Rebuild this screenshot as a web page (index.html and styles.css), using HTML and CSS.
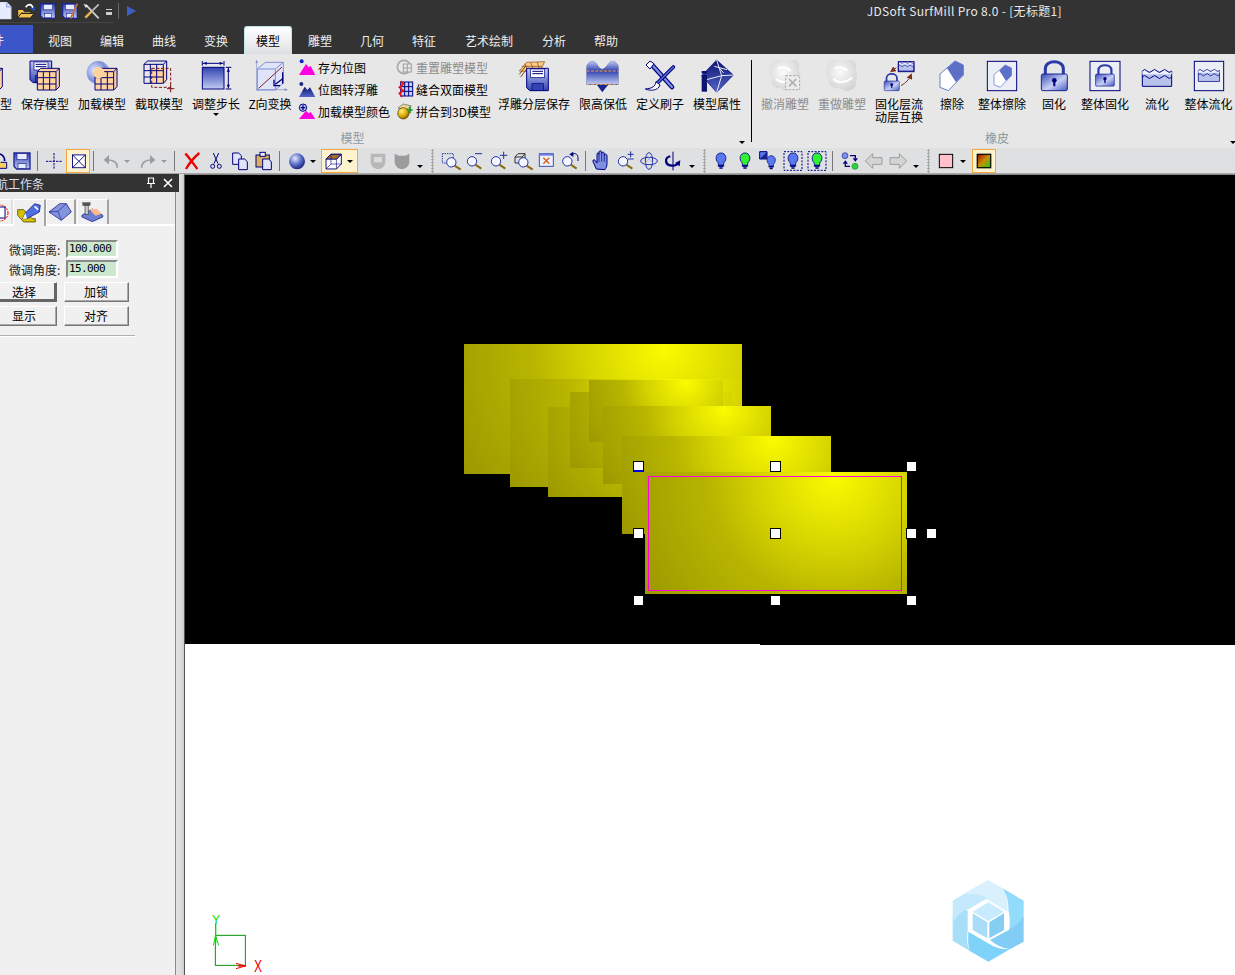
FILE: index.html
```html
<!DOCTYPE html>
<html lang="zh">
<head>
<meta charset="utf-8">
<title>JDSoft SurfMill Pro 8.0</title>
<link rel="stylesheet" href="styles.css">
</head>
<body>
<svg class="defs" aria-hidden="true">
<defs>
<linearGradient id="gb" x1="0" y1="0" x2="0" y2="1"><stop offset="0" stop-color="#3244b0"/><stop offset="1" stop-color="#c0caf2"/></linearGradient>
<linearGradient id="gbr" x1="0" y1="0" x2="0" y2="1"><stop offset="0" stop-color="#c0caf2"/><stop offset="1" stop-color="#3244b0"/></linearGradient>
<linearGradient id="gd" x1="0" y1="0" x2="1" y2="1"><stop offset="0" stop-color="#3a4cb8"/><stop offset=".55" stop-color="#c6d0f4"/><stop offset="1" stop-color="#4a5cc0"/></linearGradient>
<linearGradient id="gm" x1="0" y1="0" x2="0" y2="1"><stop offset="0" stop-color="#0c1470"/><stop offset="1" stop-color="#5566c8"/></linearGradient>
<radialGradient id="gs" cx=".38" cy=".32" r=".75"><stop offset="0" stop-color="#e4e9fb"/><stop offset=".5" stop-color="#5f72cc"/><stop offset="1" stop-color="#12186e"/></radialGradient>
<radialGradient id="gring" cx=".35" cy=".4" r=".75"><stop offset="0" stop-color="#e6ebff"/><stop offset=".6" stop-color="#7d8fd8"/><stop offset="1" stop-color="#c5cbe8"/></radialGradient>
<radialGradient id="gblob" cx=".45" cy=".4" r=".7"><stop offset="0" stop-color="#fafafa"/><stop offset="1" stop-color="#cfcfcf"/></radialGradient>
<radialGradient id="ggold" cx=".35" cy=".3" r=".8"><stop offset="0" stop-color="#fff27a"/><stop offset=".6" stop-color="#d9a300"/><stop offset="1" stop-color="#6b4a00"/></radialGradient>
<linearGradient id="gheat" x1="0" y1="0" x2="1" y2="1"><stop offset="0" stop-color="#a00808"/><stop offset=".5" stop-color="#c89000"/><stop offset="1" stop-color="#10d020"/></linearGradient>

<g id="grid">
<path d="M0 10 L10 0 H66 V55 L56 65 H0Z" fill="#ffd49c" stroke="#00007f" stroke-width="3"/>
<path d="M56 10 L66 0 M0 10H56V65 M18 10V65 M37 10V65 M0 28H56 M0 47H56" fill="none" stroke="#00007f" stroke-width="3"/>
</g>
<g id="eraser">
<path d="M0 39 L45 0 L70 12 V42 L25 89 L0 79Z" fill="#fff" stroke="#6a7dd0" stroke-width="3" stroke-linejoin="round"/>
<path d="M21 22 L45 0 L70 12 V42 L48 64Z" fill="#5c70c8"/>
</g>
<g id="lock">
<path d="M13 40 V22 C13 -6 67 -6 67 22 V40" fill="none" stroke="#2a3aa8" stroke-width="9"/>
<rect x="1" y="38" width="78" height="50" rx="5" fill="url(#gd)" stroke="#1a2490" stroke-width="3"/>
<circle cx="40" cy="57" r="7" fill="#00007f"/><path d="M38 58h4v16h-4z" fill="#00007f" stroke="#00007f" stroke-width="2"/>
</g>
<g id="water">
<path d="M0 6 V52 H88 V6" fill="#b7c3ec" stroke="#00007f" stroke-width="3"/>
<path d="M0 6 q7 -9 14 0 t15 0 t15 0 t15 0 t15 0 t14 0 V16 H0Z" fill="#eef2ff" stroke="none"/>
<path d="M0 6 q7 -9 14 0 t15 0 t15 0 t15 0 t15 0 t14 0 M0 24 q7 -9 14 0 t15 0 t15 0 t15 0 t15 0 t14 0" fill="none" stroke="#00007f" stroke-width="3"/>
</g>
<g id="mag">
<path d="M40 47 L58 59" stroke="#8a6a10" stroke-width="6"/>
<circle cx="30" cy="37" r="14" fill="#f4f7ff" stroke="#2230a8" stroke-width="3"/>
</g>
<g id="bulb">
<path d="M36 12 C20 12 17 32 28 42 V52 H44 V42 C55 32 52 12 36 12Z" stroke="#1a2490" stroke-width="3"/>
<path d="M29 50 H43 M31 57 H41" stroke="#00007f" stroke-width="5"/>
</g>
<marker id="ar" markerWidth="6" markerHeight="6" refX="4" refY="3" orient="auto"><path d="M0 0L6 3L0 6Z" fill="#7d3020"/></marker>

<symbol id="r-cut" viewBox="0 0 120 108"><use href="#grid" x="37" y="28"/></symbol>
<symbol id="r-save" viewBox="0 0 120 108">
<path d="M15 6 H80 V71 H24 L15 62Z" fill="url(#gbr)" stroke="#00007f" stroke-width="3"/>
<rect x="27" y="9" width="42" height="24" fill="#fff" stroke="#00007f" stroke-width="2"/><path d="M32 16H64M32 23H64" stroke="#00007f" stroke-width="3"/>
<rect x="31" y="50" width="34" height="20" fill="#3244b0" stroke="#00007f" stroke-width="2"/>
<use href="#grid" x="37" y="28"/></symbol>
<symbol id="r-load" viewBox="0 0 120 108">
<circle cx="49" cy="41" r="35" fill="url(#gring)"/><use href="#grid" x="39" y="28"/>
<circle cx="50" cy="41" r="17" fill="#ffd49c"/></symbol>
<symbol id="r-crop" viewBox="0 0 120 108">
<rect x="38" y="28" width="44" height="44" fill="#ffd49c"/>
<path d="M15 16 L25 6 H83 V62 L73 73 H15Z" fill="none" stroke="#00007f" stroke-width="3"/>
<path d="M15 16H73V73 M34 16V73 M53 16V73 M15 35H73 M15 54H73 M73 16L83 6" fill="none" stroke="#00007f" stroke-width="3"/>
<path d="M38 28H95V85H38Z" fill="none" stroke="#7f1010" stroke-width="3" stroke-dasharray="9 5"/>
<path d="M95 78V100 M84 89H106" stroke="#7f1010" stroke-width="3"/></symbol>
<symbol id="r-step" viewBox="0 0 120 108">
<rect x="19" y="25" width="65" height="65" fill="url(#gb)" stroke="#00007f" stroke-width="3"/>
<path d="M19 6V20 M84 6V20 M89 25H106 M89 90H106" stroke="#00007f" stroke-width="3"/>
<path d="M21 13H82 M97 27V88" stroke="#00007f" stroke-width="3"/>
<path d="M22 13l10-5v10z M81 13l-10-5v10z M97 28l-5 10h10z M97 87l-5-10h10z" fill="#00007f"/></symbol>
<symbol id="r-z" viewBox="0 0 120 108">
<path d="M22 30 L46 10 H100 V72 L76 93 H22Z" fill="#dfe4f8" stroke="#8090d8" stroke-width="3"/>
<path d="M22 30H76V93 M76 30L100 10" fill="none" stroke="#8090d8" stroke-width="3"/>
<path d="M20 96 V8 M20 92 H108" stroke="#7d8ccc" stroke-width="2"/><path d="M20 2l-4 10h8z M114 92l-10-4v8z" fill="#7d8ccc"/>
<path d="M26 88 L96 24" stroke="#7d2020" stroke-width="3"/>
<path d="M76 76 L100 58 M98 40V74 M72 62 V80 H90" fill="none" stroke="#00007f" stroke-width="4"/></symbol>
<symbol id="r-layer" viewBox="0 0 120 108">
<path d="M16 36 L38 10 L92 8 L76 40Z" fill="#ffc98a" stroke="#7f4a10" stroke-width="2"/>
<path d="M24 22 L84 22 M32 14 L44 38 M50 10 L60 38 M70 9 L76 30" stroke="#7f4a10" stroke-width="2"/>
<path d="M16 46 L36 20 M20 54 L38 30" stroke="#7f4a10" stroke-width="3"/>
<path d="M38 28 H103 V95 H47 L38 86Z" fill="url(#gbr)" stroke="#00007f" stroke-width="3"/>
<rect x="50" y="30" width="42" height="25" fill="#fff" stroke="#00007f" stroke-width="2"/><path d="M55 37H87M55 44H87" stroke="#00007f" stroke-width="3"/>
<rect x="54" y="74" width="34" height="20" fill="#3244b0" stroke="#00007f" stroke-width="2"/></symbol>
<symbol id="r-limit" viewBox="0 0 120 108">
<path d="M11 20 Q26 -6 42 16 Q56 44 75 16 Q91 -6 106 20 V78 L75 78 L58 100 L42 78 H11Z" fill="#1a2690"/>
<path d="M11 20 Q26 -6 42 16 Q56 44 75 16 Q91 -6 106 20 V36 H11Z" fill="url(#gbr)"/>
<path d="M11 36 H106 V76 H11Z" fill="url(#gb)"/>
<path d="M11 36H106 M11 76H106" stroke="#f5a742" stroke-width="3" stroke-dasharray="9 4"/></symbol>
<symbol id="r-brush" viewBox="0 0 120 108">
<path d="M40 22 L96 84" stroke="#00007f" stroke-width="14" stroke-linecap="round"/><path d="M40 22 L96 84" stroke="#7f8fe0" stroke-width="7" stroke-linecap="round"/>
<path d="M100 24 L52 72" stroke="#00007f" stroke-width="11" stroke-linecap="round"/><path d="M100 24 L52 72" stroke="#5a6cd0" stroke-width="5" stroke-linecap="round"/>
<path d="M48 68 C46 82 38 88 16 90 C30 96 54 96 60 78Z" fill="#fff" stroke="#00007f" stroke-width="3"/>
<path d="M18 18 L30 6 L42 14 L30 30Z" fill="#fff" stroke="#00007f" stroke-width="3"/></symbol>
<symbol id="r-prop" viewBox="0 0 120 108">
<path d="M59 3 L109 48 L59 100 L14 50Z" fill="url(#gm)" stroke="#00007f" stroke-width="2"/>
<path d="M59 3 L74 50 L29 62 M74 50 L109 48 M74 50 L59 100 M52 22L90 32 M66 26 L80 42" fill="none" stroke="#e8ecff" stroke-width="3"/>
<rect x="14" y="48" width="16" height="50" fill="#0c1470"/><rect x="14" y="36" width="16" height="8" fill="#0c1470"/></symbol>
<symbol id="r-undo" viewBox="0 0 120 108">
<path d="M30 6 C52 -2 64 10 80 4 C102 -2 106 22 100 34 C112 54 100 68 96 78 C80 100 56 96 48 86 C30 92 14 74 20 56 C6 40 14 16 30 6Z" fill="url(#gblob)"/>
<path d="M38 30 C50 20 70 26 76 36 M34 60 C48 74 70 72 84 58" fill="none" stroke="#fff" stroke-width="6"/>
<rect x="62" y="50" width="42" height="42" fill="#ececec" stroke="#a8a8a8" stroke-width="3" stroke-dasharray="7 4"/>
<path d="M72 60L94 82M94 60L72 82" stroke="#b0b0b0" stroke-width="5"/></symbol>
<symbol id="r-redo" viewBox="0 0 120 108">
<path d="M30 6 C52 -2 64 10 80 4 C102 -2 106 22 100 34 C112 54 100 68 100 82 C88 102 62 96 54 88 C32 92 14 74 20 56 C6 40 14 16 30 6Z" fill="url(#gblob)"/>
<path d="M38 30 C50 20 70 26 76 36 M34 60 C48 74 70 72 90 56" fill="none" stroke="#fff" stroke-width="6"/></symbol>
<symbol id="r-swap" viewBox="0 0 120 108">
<g transform="translate(58 0) scale(.53)"><use href="#water" x="0" y="15"/></g>
<rect x="58" y="8" width="47" height="30" fill="none" stroke="#00007f" stroke-width="3"/>
<path d="M66 80 C80 72 90 62 96 48" fill="none" stroke="#7d3020" stroke-width="3" marker-end="url(#ar)"/>
<path d="M52 26 L38 36" stroke="#7d3020" stroke-width="3" marker-end="url(#ar)"/>
<g transform="translate(15 44) scale(.58)"><use href="#lock"/></g></symbol>
<symbol id="r-erase" viewBox="0 0 120 108"><use href="#eraser" x="24" y="6"/></symbol>
<symbol id="r-eraseall" viewBox="0 0 120 108"><rect x="16" y="7" width="88" height="88" fill="#eceef6" stroke="#00007f" stroke-width="3"/><g transform="translate(36 18) scale(.75)"><use href="#eraser"/></g></symbol>
<symbol id="r-fix" viewBox="0 0 120 108"><use href="#lock" x="21" y="7"/></symbol>
<symbol id="r-fixall" viewBox="0 0 120 108"><rect x="15" y="7" width="90" height="88" fill="#eceef6" stroke="#00007f" stroke-width="3"/><g transform="translate(31 18) scale(.72)"><use href="#lock"/></g></symbol>
<symbol id="r-flow" viewBox="0 0 120 108"><use href="#water" x="16" y="30"/></symbol>
<symbol id="r-flowall" viewBox="0 0 120 108"><rect x="16" y="7" width="88" height="88" fill="#eceef6" stroke="#00007f" stroke-width="3"/><g transform="translate(28 30) scale(.72)"><use href="#water"/></g></symbol>

<symbol id="s-pic" viewBox="0 0 54 54"><path d="M3 51 L24 18 L32 28 L38 24 L52 51Z" fill="#ff00e0"/><circle cx="11" cy="10" r="6" fill="#1020d0"/></symbol>
<symbol id="s-relief" viewBox="0 0 54 54"><path d="M3 51 L20 20 L28 30 L36 22 L52 51Z" fill="url(#gm)"/><circle cx="10" cy="12" r="6" fill="#222a80"/></symbol>
<symbol id="s-color" viewBox="0 0 54 54"><path d="M3 51 L24 26 L32 34 L38 30 L52 51Z" fill="#ff00e0"/><circle cx="15" cy="17" r="11" fill="#c0caf2" stroke="#00007f" stroke-width="3"/><path d="M15 10V24M8 17H22" stroke="#00007f" stroke-width="4"/></symbol>
<symbol id="s-reset" viewBox="0 0 54 54"><circle cx="24" cy="27" r="20" fill="none" stroke="#a8a8a8" stroke-width="5"/><rect x="22" y="18" width="24" height="24" fill="#e7e7e7" stroke="#a0a0a0" stroke-width="3"/><path d="M34 18V42M22 30H46" stroke="#a0a0a0" stroke-width="3"/></symbol>
<symbol id="s-sew" viewBox="0 0 54 54"><rect x="14" y="6" width="36" height="42" fill="#c6d0f4" stroke="#00007f" stroke-width="3"/><path d="M26 6V48M38 6V48M14 20H50M14 34H50" stroke="#00007f" stroke-width="3"/><path d="M14 3 L22 12 L10 22 L22 32 L10 40 L18 51" fill="none" stroke="#ee1010" stroke-width="5"/></symbol>
<symbol id="s-merge" viewBox="0 0 54 54"><path d="M6 18 L22 6 L46 12 L30 24Z" fill="#eadf9a" stroke="#555" stroke-width="2"/><circle cx="22" cy="34" r="17" fill="url(#ggold)" stroke="#4a3500" stroke-width="2"/><path d="M42 14V34M34 24H50" stroke="#0a9a20" stroke-width="5"/></symbol>

<symbol id="t-redoy" viewBox="0 0 72 72"><path d="M20 58 H62 V40 H44" fill="#f8d060" stroke="#00007f" stroke-width="3"/><path d="M26 16 C46 12 56 20 56 36" fill="none" stroke="#00007f" stroke-width="5"/></symbol>
<symbol id="t-save" viewBox="0 0 72 72"><path d="M12 12H60V60H20L12 52Z" fill="url(#gb)" stroke="#1a2490" stroke-width="4"/><rect x="21" y="14" width="30" height="18" fill="#e8ecff" stroke="#1a2490" stroke-width="2"/><rect x="24" y="44" width="24" height="14" fill="#e8ecff" stroke="#1a2490" stroke-width="2"/></symbol>
<symbol id="t-cross" viewBox="0 0 72 72"><path d="M12 37H60M36 12V62" stroke="#00007f" stroke-width="3" stroke-dasharray="7 3"/></symbol>
<symbol id="t-boxx" viewBox="0 0 72 72"><rect x="18" y="16" width="42" height="42" fill="#fff" stroke="#00007f" stroke-width="3"/><path d="M18 16L60 58M60 16L18 58" stroke="#00007f" stroke-width="3"/></symbol>
<symbol id="t-undo" viewBox="0 0 72 72"><path d="M55 56 C55 38 40 32 24 33" fill="none" stroke="#9c9c9c" stroke-width="5"/><path d="M14 33 L30 18 V46Z" fill="#9c9c9c"/></symbol>
<symbol id="t-redo" viewBox="0 0 72 72"><path d="M17 56 C17 38 32 32 48 33" fill="none" stroke="#9c9c9c" stroke-width="5"/><path d="M58 33 L42 18 V46Z" fill="#9c9c9c"/></symbol>
<symbol id="t-x" viewBox="0 0 72 72"><path d="M16 14 C28 26 40 44 52 60 M58 12 C44 24 28 42 18 60" fill="none" stroke="#f00000" stroke-width="7"/></symbol>
<symbol id="t-cut" viewBox="0 0 72 72"><path d="M28 12 L42 44 M44 12 L30 44" stroke="#00007f" stroke-width="3"/><circle cx="26" cy="52" r="6" fill="none" stroke="#00007f" stroke-width="3"/><circle cx="46" cy="52" r="6" fill="none" stroke="#00007f" stroke-width="3"/></symbol>
<symbol id="t-copy" viewBox="0 0 72 72"><path d="M14 12H32L40 20V46H14Z" fill="#dfe4fa" stroke="#00007f" stroke-width="3"/><path d="M32 30H50L58 38V62H32Z" fill="#dfe4fa" stroke="#00007f" stroke-width="3"/></symbol>
<symbol id="t-paste" viewBox="0 0 72 72"><rect x="12" y="18" width="40" height="36" fill="#d8b060" stroke="#00007f" stroke-width="3"/><rect x="24" y="10" width="16" height="12" fill="#eee" stroke="#00007f" stroke-width="3"/><path d="M32 30H50L58 38V62H32Z" fill="#dfe4fa" stroke="#00007f" stroke-width="3"/></symbol>
<symbol id="t-sphere" viewBox="0 0 72 72"><circle cx="36" cy="37" r="24" fill="url(#gs)"/></symbol>
<symbol id="t-cube" viewBox="0 0 72 72"><path d="M10 30L26 14H60V46L44 62H10Z" fill="#fff" stroke="#00007f" stroke-width="3"/><path d="M10 30L26 14H60L44 30Z" fill="#a0702a" stroke="#00007f" stroke-width="3"/><path d="M44 30V62M60 14L44 30M26 14V46H60M26 46L10 62" fill="none" stroke="#00007f" stroke-width="2"/></symbol>
<symbol id="t-sh1" viewBox="0 0 72 72"><path d="M14 14H58V38C58 52 46 60 36 60C26 60 14 52 14 38Z" fill="#b8b8b8"/><path d="M24 24H48V40H24Z" fill="#dcdcdc"/></symbol>
<symbol id="t-sh2" viewBox="0 0 72 72"><path d="M14 14L26 20H46L58 14V38C58 52 46 60 36 60C26 60 14 52 14 38Z" fill="#9c9c9c"/></symbol>
<symbol id="t-z1" viewBox="0 0 72 72"><rect x="13" y="14" width="33" height="28" fill="none" stroke="#2230a8" stroke-width="3" stroke-dasharray="4 3"/><use href="#mag" x="10" y="3"/></symbol>
<symbol id="t-z2" viewBox="0 0 72 72"><use href="#mag"/><path d="M39 14H60" stroke="#2230a8" stroke-width="3"/></symbol>
<symbol id="t-z3" viewBox="0 0 72 72"><use href="#mag"/><path d="M42 19H64M53 8V30" stroke="#2230a8" stroke-width="3"/></symbol>
<symbol id="t-z4" viewBox="0 0 72 72"><path d="M15 24L24 14H45V42H15Z M15 24H36V42 M36 24L45 14" fill="none" stroke="#333" stroke-width="3"/><use href="#mag" x="10" y="3"/></symbol>
<symbol id="t-z5" viewBox="0 0 72 72"><rect x="16" y="14" width="42" height="38" fill="#eef1ff" stroke="#3a4cc0" stroke-width="3"/><rect x="16" y="14" width="42" height="6" fill="#6f80d8"/><path d="M28 26L46 44M46 26L28 44" stroke="#e05a10" stroke-width="4"/></symbol>
<symbol id="t-z6" viewBox="0 0 72 72"><use href="#mag" x="-2"/><path d="M40 18 C48 10 60 14 60 26 V36" fill="none" stroke="#00007f" stroke-width="3"/><path d="M34 16L46 8V24Z" fill="#00007f"/></symbol>
<symbol id="t-hand" viewBox="0 0 72 72"><path d="M22 60 L12 38 C10 32 16 30 20 36 L24 42 V16 C24 10 30 10 30 16 V10 C30 4 38 4 38 10 V14 C38 8 46 8 46 14 V20 C46 14 54 14 54 20 V44 C54 54 50 58 48 62Z" fill="#7f90e0" stroke="#00007f" stroke-width="3"/><path d="M30 16V38M38 14V38M46 20V38" stroke="#00007f" stroke-width="2"/></symbol>
<symbol id="t-zpm" viewBox="0 0 72 72"><use href="#mag"/><path d="M44 16H62M53 7V25M44 30H62" stroke="#2230a8" stroke-width="3"/></symbol>
<symbol id="t-atom" viewBox="0 0 72 72"><ellipse cx="36" cy="36" rx="25" ry="11" fill="none" stroke="#2230a8" stroke-width="3"/><ellipse cx="36" cy="36" rx="11" ry="25" fill="none" stroke="#2230a8" stroke-width="3"/><path d="M26 16L54 50M46 16L20 50" stroke="#8898e0" stroke-width="2"/></symbol>
<symbol id="t-rot" viewBox="0 0 72 72"><path d="M36 8V64" stroke="#00007f" stroke-width="3"/><path d="M28 22 C10 24 10 50 34 50 C44 50 50 46 52 40" fill="none" stroke="#00007f" stroke-width="7"/><path d="M42 42L58 34L56 52Z" fill="#00007f"/></symbol>
<symbol id="t-b1" viewBox="0 0 72 72"><use href="#bulb" fill="#5a78f0"/></symbol>
<symbol id="t-b2" viewBox="0 0 72 72"><use href="#bulb" fill="#30f030"/></symbol>
<symbol id="t-b3" viewBox="0 0 72 72"><path d="M8 8H30V30H8Z" fill="#5a78f0" stroke="#00007f" stroke-width="3"/><path d="M8 30L30 8V30Z" fill="#1a2490"/><g transform="translate(12 10) scale(.85)"><use href="#bulb" fill="#5a78f0"/></g></symbol>
<symbol id="t-b4" viewBox="0 0 72 72"><rect x="9" y="8" width="54" height="56" fill="none" stroke="#00007f" stroke-width="3" stroke-dasharray="6 4"/><use href="#bulb" fill="#5a78f0"/></symbol>
<symbol id="t-b5" viewBox="0 0 72 72"><rect x="9" y="8" width="54" height="56" fill="none" stroke="#00007f" stroke-width="3" stroke-dasharray="6 4"/><use href="#bulb" fill="#30f030"/></symbol>
<symbol id="t-cyc" viewBox="0 0 72 72"><circle cx="21" cy="20" r="9" fill="#7d8fe8" stroke="#2230a8" stroke-width="2"/><circle cx="51" cy="52" r="9" fill="#30d040" stroke="#109020" stroke-width="2"/><path d="M36 20H52V28 M36 52H22V44" fill="none" stroke="#00007f" stroke-width="4"/><path d="M44 28H60L52 38Z M14 44H30L22 34Z" fill="#00007f"/></symbol>
<symbol id="t-al" viewBox="0 0 72 72"><path d="M10 36L32 14V26H60V46H32V58Z" fill="#d4d4d4" stroke="#9c9c9c" stroke-width="3"/></symbol>
<symbol id="t-ar" viewBox="0 0 72 72"><path d="M62 36L40 14V26H12V46H40V58Z" fill="#d4d4d4" stroke="#9c9c9c" stroke-width="3"/></symbol>
<symbol id="t-pink" viewBox="0 0 72 72"><rect x="16" y="16" width="40" height="40" fill="#ffc0cb" stroke="#000" stroke-width="3"/></symbol>
<symbol id="t-heat" viewBox="0 0 72 72"><rect x="14" y="14" width="44" height="44" fill="url(#gheat)" stroke="#000" stroke-width="4"/></symbol>
</defs>
</svg>

<header class="titlebar">
  <div class="qat">
    <svg class="q q-new" viewBox="0 0 36 48"><path d="M-6 4H16L26 14V42H-6Z" fill="#e6ebff" stroke="#dfe3f5" stroke-width="3"/><path d="M16 4V14H26" fill="none" stroke="#9aa6d8" stroke-width="3"/></svg>
    <svg class="q" viewBox="0 0 66 66"><path d="M8 54 V28 H24 L28 34 H48 V40H18L8 54 H46 L58 40 H18" fill="#f0c050" stroke="#222" stroke-width="3"/><path d="M32 22 C40 10 50 12 54 24" fill="none" stroke="#fff" stroke-width="5"/><path d="M46 26L60 20L58 34Z" fill="#2a48c8"/></svg>
    <svg class="q" viewBox="0 0 72 72"><use href="#t-save"/></svg>
    <svg class="q" viewBox="0 0 72 72"><use href="#t-save"/><path d="M38 60L60 12" stroke="#c8743c" stroke-width="6"/></svg>
    <svg class="q" viewBox="0 0 72 72"><path d="M16 16L58 60" stroke="#d0d0d0" stroke-width="6"/><path d="M58 14L34 38" stroke="#bbb" stroke-width="6"/><path d="M34 38L14 58" stroke="#e8b24c" stroke-width="8"/><path d="M8 12L22 18L16 26Z" fill="#eee"/></svg>
    <i class="qdd"></i>
    <span class="qsep"></span>
    <i class="qplay"></i>
  </div>
  <div class="apptitle">JDSoft SurfMill Pro 8.0 - [无标题1]</div>
</header>

<nav class="tabs">
  <span class="filetab">文件</span>
  <span class="tab">视图</span><span class="tab">编辑</span><span class="tab">曲线</span><span class="tab">变换</span>
  <span class="tab active">模型</span>
  <span class="tab">雕塑</span><span class="tab">几何</span><span class="tab">特征</span>
  <span class="tab wide">艺术绘制</span>
  <span class="tab">分析</span><span class="tab">帮助</span>
</nav>

<section class="ribbon">
  <div class="group g-model">
    <div class="items">
      <div class="rb w57"><svg class="ric"><use href="#r-cut"/></svg><span>编辑模型</span></div>
      <div class="rb w57"><svg class="ric"><use href="#r-save"/></svg><span>保存模型</span></div>
      <div class="rb w57"><svg class="ric"><use href="#r-load"/></svg><span>加载模型</span></div>
      <div class="rb w57"><svg class="ric"><use href="#r-crop"/></svg><span>截取模型</span></div>
      <div class="rb w57"><svg class="ric"><use href="#r-step"/></svg><span>调整步长</span><i class="caret"></i></div>
      <div class="rb w51"><svg class="ric"><use href="#r-z"/></svg><span>Z向变换</span></div>
      <div class="smallcol c1">
        <div class="sm"><svg class="sic"><use href="#s-pic"/></svg>存为位图</div>
        <div class="sm"><svg class="sic"><use href="#s-relief"/></svg>位图转浮雕</div>
        <div class="sm"><svg class="sic"><use href="#s-color"/></svg>加载模型颜色</div>
      </div>
      <div class="smallcol c2">
        <div class="sm off"><svg class="sic"><use href="#s-reset"/></svg>重置雕塑模型</div>
        <div class="sm"><svg class="sic"><use href="#s-sew"/></svg>缝合双面模型</div>
        <div class="sm"><svg class="sic"><use href="#s-merge"/></svg>拼合到3D模型</div>
      </div>
      <div class="rb w81"><svg class="ric"><use href="#r-layer"/></svg><span>浮雕分层保存</span></div>
      <div class="rb w57"><svg class="ric"><use href="#r-limit"/></svg><span>限高保低</span></div>
      <div class="rb w57"><svg class="ric"><use href="#r-brush"/></svg><span>定义刷子</span></div>
      <div class="rb w57"><svg class="ric"><use href="#r-prop"/></svg><span>模型属性</span></div>
    </div>
    <div class="glabel">模型<i class="launch"></i></div>
  </div>
  <div class="gsep"></div>
  <div class="group g-eraser">
    <div class="items">
      <div class="rb w57 off"><svg class="ric"><use href="#r-undo"/></svg><span>撤消雕塑</span></div>
      <div class="rb w57 off"><svg class="ric"><use href="#r-redo"/></svg><span>重做雕塑</span></div>
      <div class="rb w57"><svg class="ric"><use href="#r-swap"/></svg><span>固化层流<br>动层互换</span></div>
      <div class="rb w49"><svg class="ric"><use href="#r-erase"/></svg><span>擦除</span></div>
      <div class="rb w51"><svg class="ric"><use href="#r-eraseall"/></svg><span>整体擦除</span></div>
      <div class="rb w53"><svg class="ric"><use href="#r-fix"/></svg><span>固化</span></div>
      <div class="rb w49"><svg class="ric"><use href="#r-fixall"/></svg><span>整体固化</span></div>
      <div class="rb w55"><svg class="ric"><use href="#r-flow"/></svg><span>流化</span></div>
      <div class="rb w48"><svg class="ric"><use href="#r-flowall"/></svg><span>整体流化</span></div>
    </div>
    <div class="glabel">橡皮<i class="launch"></i></div>
  </div>
</section>

<section class="toolbar">
  <svg class="t"><use href="#t-redoy"/></svg><svg class="t"><use href="#t-save"/></svg>
  <i class="sep"></i>
  <svg class="t m2"><use href="#t-cross"/></svg>
  <span class="hot"><svg class="t"><use href="#t-boxx"/></svg></span>
  <i class="sep"></i>
  <svg class="t m3"><use href="#t-undo"/></svg><i class="dd w8 gray"></i>
  <svg class="t m5"><use href="#t-redo"/></svg><i class="dd w8 gray"></i>
  <i class="sep m3"></i>
  <svg class="t m3"><use href="#t-x"/></svg><svg class="t"><use href="#t-cut"/></svg><svg class="t"><use href="#t-copy"/></svg><svg class="t"><use href="#t-paste"/></svg>
  <i class="sep"></i>
  <svg class="t m3"><use href="#t-sphere"/></svg><i class="dd w8"></i>
  <span class="hot hotwide m4"><svg class="t"><use href="#t-cube"/></svg><i class="dd w8"></i></span>
  <svg class="t m8"><use href="#t-sh1"/></svg><svg class="t"><use href="#t-sh2"/></svg><i class="dd w12 low"></i>
  <i class="grip w12"></i>
  <svg class="t"><use href="#t-z1"/></svg><svg class="t"><use href="#t-z2"/></svg><svg class="t"><use href="#t-z3"/></svg><svg class="t"><use href="#t-z4"/></svg><svg class="t"><use href="#t-z5"/></svg><svg class="t"><use href="#t-z6"/></svg>
  <i class="sep"></i>
  <svg class="t m1"><use href="#t-hand"/></svg><svg class="t"><use href="#t-zpm"/></svg><svg class="t"><use href="#t-atom"/></svg><svg class="t"><use href="#t-rot"/></svg><i class="dd w14 low"></i>
  <i class="grip w10"></i>
  <svg class="t"><use href="#t-b1"/></svg><svg class="t"><use href="#t-b2"/></svg><svg class="t"><use href="#t-b3"/></svg><svg class="t"><use href="#t-b4"/></svg><svg class="t"><use href="#t-b5"/></svg>
  <i class="sep"></i>
  <svg class="t m3"><use href="#t-cyc"/></svg><svg class="t"><use href="#t-al"/></svg><svg class="t"><use href="#t-ar"/></svg><i class="dd w12 low"></i>
  <i class="grip w12"></i>
  <svg class="t"><use href="#t-pink"/></svg><i class="dd w10"></i>
  <span class="hot m4"><svg class="t"><use href="#t-heat"/></svg></span>
</section>

<main class="workspace">
  <aside class="panel">
    <div class="paneltitle"><span class="ptext">导航工作条</span>
      <svg class="pin" viewBox="0 0 10 12"><path d="M2.5 1H7.5V6.5H2.5Z M1 6.5H9 M5 7V11" fill="none" stroke="#fff" stroke-width="1.2"/></svg>
      <svg class="close" viewBox="0 0 10 10"><path d="M1 1L9 9M9 1L1 9" stroke="#fff" stroke-width="1.6"/></svg>
    </div>
    <div class="ptabs">
      <div class="ptab t0"><svg class="pti0" viewBox="0 0 12 24"><circle cx="0" cy="13" r="8" fill="none" stroke="#f00" stroke-width="1" stroke-dasharray="2 1"/><rect x="-4" y="7" width="9" height="11" fill="#fff" stroke="#00007f"/></svg></div>
      <div class="ptab t1"><svg class="pti" viewBox="55 98 75 60"><path d="M57 118H75L100 145H110V155H75L57 135Z" fill="#d8c000" stroke="#2a2a00" stroke-width="2"/><path d="M108 100L125 105L122 125L85 145H72L80 128Z" fill="#4f6ee0" stroke="#00007f" stroke-width="2"/><path d="M108 108L118 118" stroke="#fff" stroke-width="5"/><path d="M72 145L80 128L85 145Z" fill="#fff"/></svg></div>
      <div class="ptab t2"><svg class="pti" viewBox="150 100 75 60"><path d="M153 130L185 105H205L220 130L190 155Z" fill="#8494dc" stroke="#00007f" stroke-width="2"/><path d="M153 130L180 128L205 105M180 128L190 155" fill="none" stroke="#00007f" stroke-width="1.5"/></svg></div>
      <div class="ptab t3"><svg class="pti" viewBox="248 103 75 63"><path d="M252 145L285 125L318 145V150L285 165L252 150Z" fill="#6c7ed0" stroke="#00007f" stroke-width="2"/><path d="M275 125H300L315 140L295 146Z" fill="#ffb890"/><rect x="255" y="105" width="23" height="9" fill="#555" stroke="#222"/><rect x="262" y="114" width="10" height="28" fill="#ccc" stroke="#333" stroke-width="2"/></svg></div>
    </div>
    <div class="pbody">
      <div class="fields">
        <label class="field"><span>微调距离:</span><span class="inp">100.000</span></label>
        <label class="field"><span>微调角度:</span><span class="inp">15.000</span></label>
      </div>
      <div class="btns">
        <button class="btn def">选择</button><button class="btn">加锁</button>
        <button class="btn">显示</button><button class="btn">对齐</button>
      </div>
      <div class="rule"></div>
    </div>
  </aside>
  <div class="splitter"></div>
  <div class="view">
    <div class="canvas">
      <div class="y r1"></div><div class="y r2"></div><div class="y r3"></div><div class="y r4"></div>
      <div class="y r5"></div><div class="y r6"></div><div class="y r7"></div><div class="y r8"></div>
      <div class="pinkbox"></div>
      <i class="h ha first"></i><i class="h hb"></i><i class="h hc"></i>
      <i class="h hd"></i><i class="h he"></i><i class="h hf"></i><i class="h hg"></i>
      <i class="h hh"></i><i class="h hi"></i><i class="h hj"></i>
      <i class="notch"></i>
    </div>
    <svg class="axis" viewBox="0 0 300 225">
      <rect x="136" y="106" width="90" height="90" fill="none" stroke="#0a900a" stroke-width="3"/>
      <path d="M137 70V130" stroke="#00e000" stroke-width="4"/>
      <path d="M137 108L130 136M137 108L146 136" stroke="#00e000" stroke-width="3"/>
      <path d="M198 190L226 198L198 206" fill="none" stroke="#f00000" stroke-width="3"/><path d="M205 198H228" stroke="#f00000" stroke-width="4"/>
      <text x="138" y="72" class="axy">Y</text>
      <text transform="translate(264 215) scale(.7 1)" class="axx">X</text>
    </svg>
    <svg class="logo" viewBox="0 0 330 300">
      <path d="M175 30L218 55Q238 95 232 125L175 90Q150 70 105 68Z" fill="#d8f1fd"/>
      <path d="M218 55L281 92V135Q262 172 236 185Q243 155 235 118Q238 90 218 55Z" fill="#93dbfb"/>
      <path d="M281 135V215L240 238Q205 232 180 210L232 182Q262 170 281 135Z" fill="#82cdf5"/>
      <path d="M240 238L175 275L118 242Q112 215 115 185L172 218Q200 238 240 238Z" fill="#7fd3fb"/>
      <path d="M118 242L68 212V140Q85 112 113 122V185Q108 215 118 242Z" fill="#a9def9"/>
      <path d="M68 92L105 70Q145 68 172 85L118 116Q85 125 68 160Z" fill="#c5e9fc"/>
      <path d="M175 97L222 125L175 153L128 125Z" fill="#c8ecfd"/>
      <path d="M128 130L172 157V205L128 180Z" fill="#a9dcf8"/>
      <path d="M178 157L222 130V180L178 205Z" fill="#84cdf3"/>
    </svg>
  </div>
</main>
</body>
</html>
```
FILE: styles.css
```css
* { box-sizing: border-box; }
html, body { margin: 0; padding: 0; }
body {
  width: 1235px; height: 975px; overflow: hidden; background: #fff;
  font: 12px/13px "Noto Sans CJK SC", "Noto Sans", sans-serif; color: #000;
}
.defs { position: absolute; width: 0; height: 0; }
i { display: block; font-style: normal; }

/* title bar */
.titlebar { height: 26px; background: #333; display: flex; align-items: flex-start; justify-content: space-between; }
.qat { display: flex; align-items: center; height: 23px; border-bottom: 1px solid #444; width: 113px; overflow: visible; }
.q { width: 22px; height: 22px; flex: none; }
.q-new { width: 15px; }
.qdd { width: 6px; height: 6px; margin: 2px 0 0 3px; flex: none; border-top: 1px solid #ccc; border-bottom: 3px solid #ccc; }
.qsep { width: 1px; height: 16px; background: #666; margin-left: 6px; flex: none; }
.qplay { flex: none; margin-left: 8px; border-left: 9px solid #3f5fc8; border-top: 5px solid transparent; border-bottom: 5px solid transparent; }
.apptitle { margin: 4px 173px 0 0; color: #e8e8e8; font-size: 12px; line-height: 14px; letter-spacing: .33px; white-space: nowrap; }

/* tabs */
.tabs { height: 28px; background: #333; display: flex; color: #eee; }
.filetab { flex: none; width: 82px; margin: -1px 1px 0 -49px; height: 28px; background: #3a56c8; text-align: center; line-height: 30px; color: #fff; }
.tab { flex: none; width: 52px; text-align: center; line-height: 29px; }
.tab.wide { width: 78px; }
.tab.active {
  width: 48px; margin: 0 2px; color: #000; line-height: 28px;
  background: linear-gradient(#fff, #eceef0 60%, #dcdee0);
  border: 1px solid #bfe6e6; border-bottom: 0; border-radius: 3px 3px 0 0;
}

/* ribbon */
.ribbon { height: 94px; background: #e7e7e7; display: flex; color: #000; }
.group { display: flex; flex-direction: column; justify-content: space-between; flex: none; }
.g-model { margin-left: -40.5px; width: 786px; }
.g-eraser { width: 481px; }
.items { display: flex; }
.glabel { position: relative; height: 14px; margin-bottom: 3px; text-align: center; color: #8b9aa5; line-height: 14px; }
.launch { position: absolute; right: 1px; bottom: 1px; border-top: 3px solid #000; border-left: 3px solid transparent; border-right: 3px solid transparent; }
.g-eraser .launch { right: 2px; }
.gsep { flex: none; width: 11px; position: relative; }
.gsep::after { content: ""; position: absolute; left: 5px; top: 6px; width: 1px; height: 82px; background: #000; }

.rb { flex: none; display: flex; flex-direction: column; align-items: center; padding-top: 5px; text-align: center; white-space: nowrap; }
.ric { width: 40px; height: 36px; flex: none; margin-bottom: 2px; display: block; overflow: visible; }
.w48 { width: 48px; } .w49 { width: 49px; } .w51 { width: 51px; } .w53 { width: 53px; }
.w55 { width: 55px; } .w57 { width: 57px; } .w81 { width: 81px; }
.off { color: #8c8c8c; }
.caret { margin-top: 3px; border-top: 3px solid #000; border-left: 3px solid transparent; border-right: 3px solid transparent; }
.smallcol { flex: none; padding-top: 2px; display: flex; flex-direction: column; }
.c1 { width: 100.5px; padding-left: 2.5px; }
.c2 { width: 97.5px; }
.sm { height: 22px; display: flex; align-items: center; white-space: nowrap; }
.sic { width: 18px; height: 18px; margin-right: 2px; flex: none; }

/* toolbar */
.toolbar { height: 26px; background: #dfe0e2; border-bottom: 1px solid #a6a6a6; display: flex; align-items: center; overflow: hidden; }
.toolbar > :first-child { margin-left: -14px; }
.t { width: 24px; height: 24px; flex: none; display: block; }
.sep { flex: none; width: 6px; height: 20px; position: relative; }
.sep::after { content: ""; position: absolute; left: 2.5px; top: 0; width: 1px; height: 20px; background: #777; }
.m1 { margin-left: 1px; } .m2 { margin-left: 2px; } .m3 { margin-left: 3px; } .m4 { margin-left: 4px; } .m5 { margin-left: 5px; } .m8 { margin-left: 8px; }
.hot { flex: none; display: flex; align-items: center; height: 24px; background: #fdf3cf; border: 1px solid #f5a742; }
.hot .t { width: 22px; height: 22px; }
.hotwide { width: 37px; }
.hotwide .t { width: 24px; height: 22px; }
.dd { flex: none; height: 24px; position: relative; }
.dd::after { content: ""; position: absolute; left: 50%; top: 11px; margin-left: -3px; border-top: 3px solid #000; border-left: 3px solid transparent; border-right: 3px solid transparent; }
.dd.low::after { top: 16px; }
.dd.gray::after { border-top-color: #999; }
.w8 { width: 8px; } .w10 { width: 10px; } .w12 { width: 12px; } .w14 { width: 14px; }
.grip { flex: none; height: 24px; background: radial-gradient(circle at 50% 50%, #a8a8a8 1px, transparent 1.2px) center top / 3px 3px repeat-y; }

/* workspace */
.workspace { display: flex; height: 801px; }
.panel { flex: none; width: 176px; background: #f0f0f0; border-right: 1px solid #8a8a8a; }
.paneltitle { width: 179px; height: 18px; background: #333; color: #dde; display: flex; align-items: center; position: relative; }
.ptext { margin-left: -16px; white-space: nowrap; }
.pin { position: absolute; left: 146px; top: 3px; width: 10px; height: 12px; }
.close { position: absolute; left: 163px; top: 4px; width: 10px; height: 10px; }
.ptabs { height: 34px; padding-top: 7px; display: flex; background: #ebebeb; border-bottom: 2px solid #fff; }
.ptab { flex: none; height: 25px; background: #f0f0f0; border-top: 1px solid #fff; border-left: 1px solid #fff; border-right: 2px solid #a4a4a4; display: flex; align-items: center; justify-content: center; }
.t0 { width: 13px; border-left: 0; border-right-color: #e0e0e0; justify-content: flex-start; }
.t1 { width: 33px; height: 27px; }
.t2 { width: 30px; }
.t3 { width: 32px; margin-left: 1px; }
.pti { width: 25px; height: 20px; flex: none; }
.pti0 { width: 12px; height: 24px; flex: none; }
.pbody { padding-top: 14px; }
.fields { display: flex; flex-direction: column; gap: 2px; }
.field { height: 18px; display: flex; align-items: center; padding-left: 9px; color: #222; }
.field span:first-child { width: 57px; flex: none; white-space: nowrap; }
.inp { width: 52px; height: 18px; background: #cce8cf; border: 2px solid; border-color: #8a8a8a #fff #fff #8a8a8a; font: 11px/14px "DejaVu Sans Mono", monospace; letter-spacing: -.6px; padding-left: 1px; color: #000; }
.btns { display: grid; grid-template-columns: 65px 65px; column-gap: 7px; row-gap: 4px; margin: 4px 0 0 -8px; }
.btn { height: 20px; padding: 0 1px 2px 0; background: #f0f0f0; border: 1px solid; border-color: #fff #777 #777 #fff; box-shadow: inset -1px -1px 0 #aaa; font: inherit; color: #000; }
.def { border-color: #fff #666 #666 #fff; box-shadow: inset -2px -2px 0 #666; }
.rule { width: 135px; height: 2px; margin-top: 9px; background: #b0b0b0; border-bottom: 1px solid #fff; }
.splitter { flex: none; width: 8px; background: linear-gradient(90deg, #e4e4e4, #d8d8d8 80%, #c8c8c8); }
.view { flex: 1; position: relative; background: #fff; border-left: 1px solid #555; border-top: 1px solid #8a8a8a; overflow: hidden; }

/* model canvas */
.canvas { position: relative; height: 470px; background: #000; }
.y { position: absolute; background: radial-gradient(circle farthest-corner at 72% 4%, #fbfb00 0, #e8e800 16%, #d6d400 33%, #b9b600 55%, #a9a700 78%, #9c9800 100%); }
.r1 { left: 279px; top: 169px; width: 278px; height: 130px; }
.r2 { left: 325px; top: 204px; width: 232px; height: 108px; }
.r3 { left: 363px; top: 232px; width: 192px; height: 90px; }
.r4 { left: 385px; top: 217px; width: 162px; height: 76px; }
.r5 { left: 404px; top: 205px; width: 134px; height: 62px; }
.r6 { left: 418px; top: 231px; width: 168px; height: 78px; }
.r7 { left: 437px; top: 261px; width: 209px; height: 98px; }
.r8 { left: 460px; top: 297px; width: 262px; height: 122px; }
.pinkbox { position: absolute; left: 463px; top: 301px; width: 254px; height: 115px; border: 1px solid #ff00e0; }
.h { position: absolute; width: 11px; height: 11px; background: #fff; border: 1px solid #000; }
.ha { left: 448px; top: 286px; } .hb { left: 585px; top: 286px; } .hc { left: 721px; top: 286px; }
.hd { left: 448px; top: 353px; } .he { left: 585px; top: 353px; } .hf { left: 721px; top: 353px; } .hg { left: 741px; top: 353px; }
.hh { left: 448px; top: 420px; } .hi { left: 585px; top: 420px; } .hj { left: 721px; top: 420px; }
.first { border-bottom: 2px solid #0000e0; }
.notch { position: absolute; left: 0; bottom: 0; width: 575px; height: 1px; background: #fff; }

.axis { position: absolute; left: -15px; top: 725px; width: 100px; height: 75px; }
.axy, .axx { font: 36px "Liberation Sans", sans-serif; text-anchor: middle; }
.axx { font-size: 52px; }
.axy { fill: #00e000; }
.axx { fill: #f00000; }
.logo { position: absolute; left: 745px; top: 695px; width: 110px; height: 100px; }
```
